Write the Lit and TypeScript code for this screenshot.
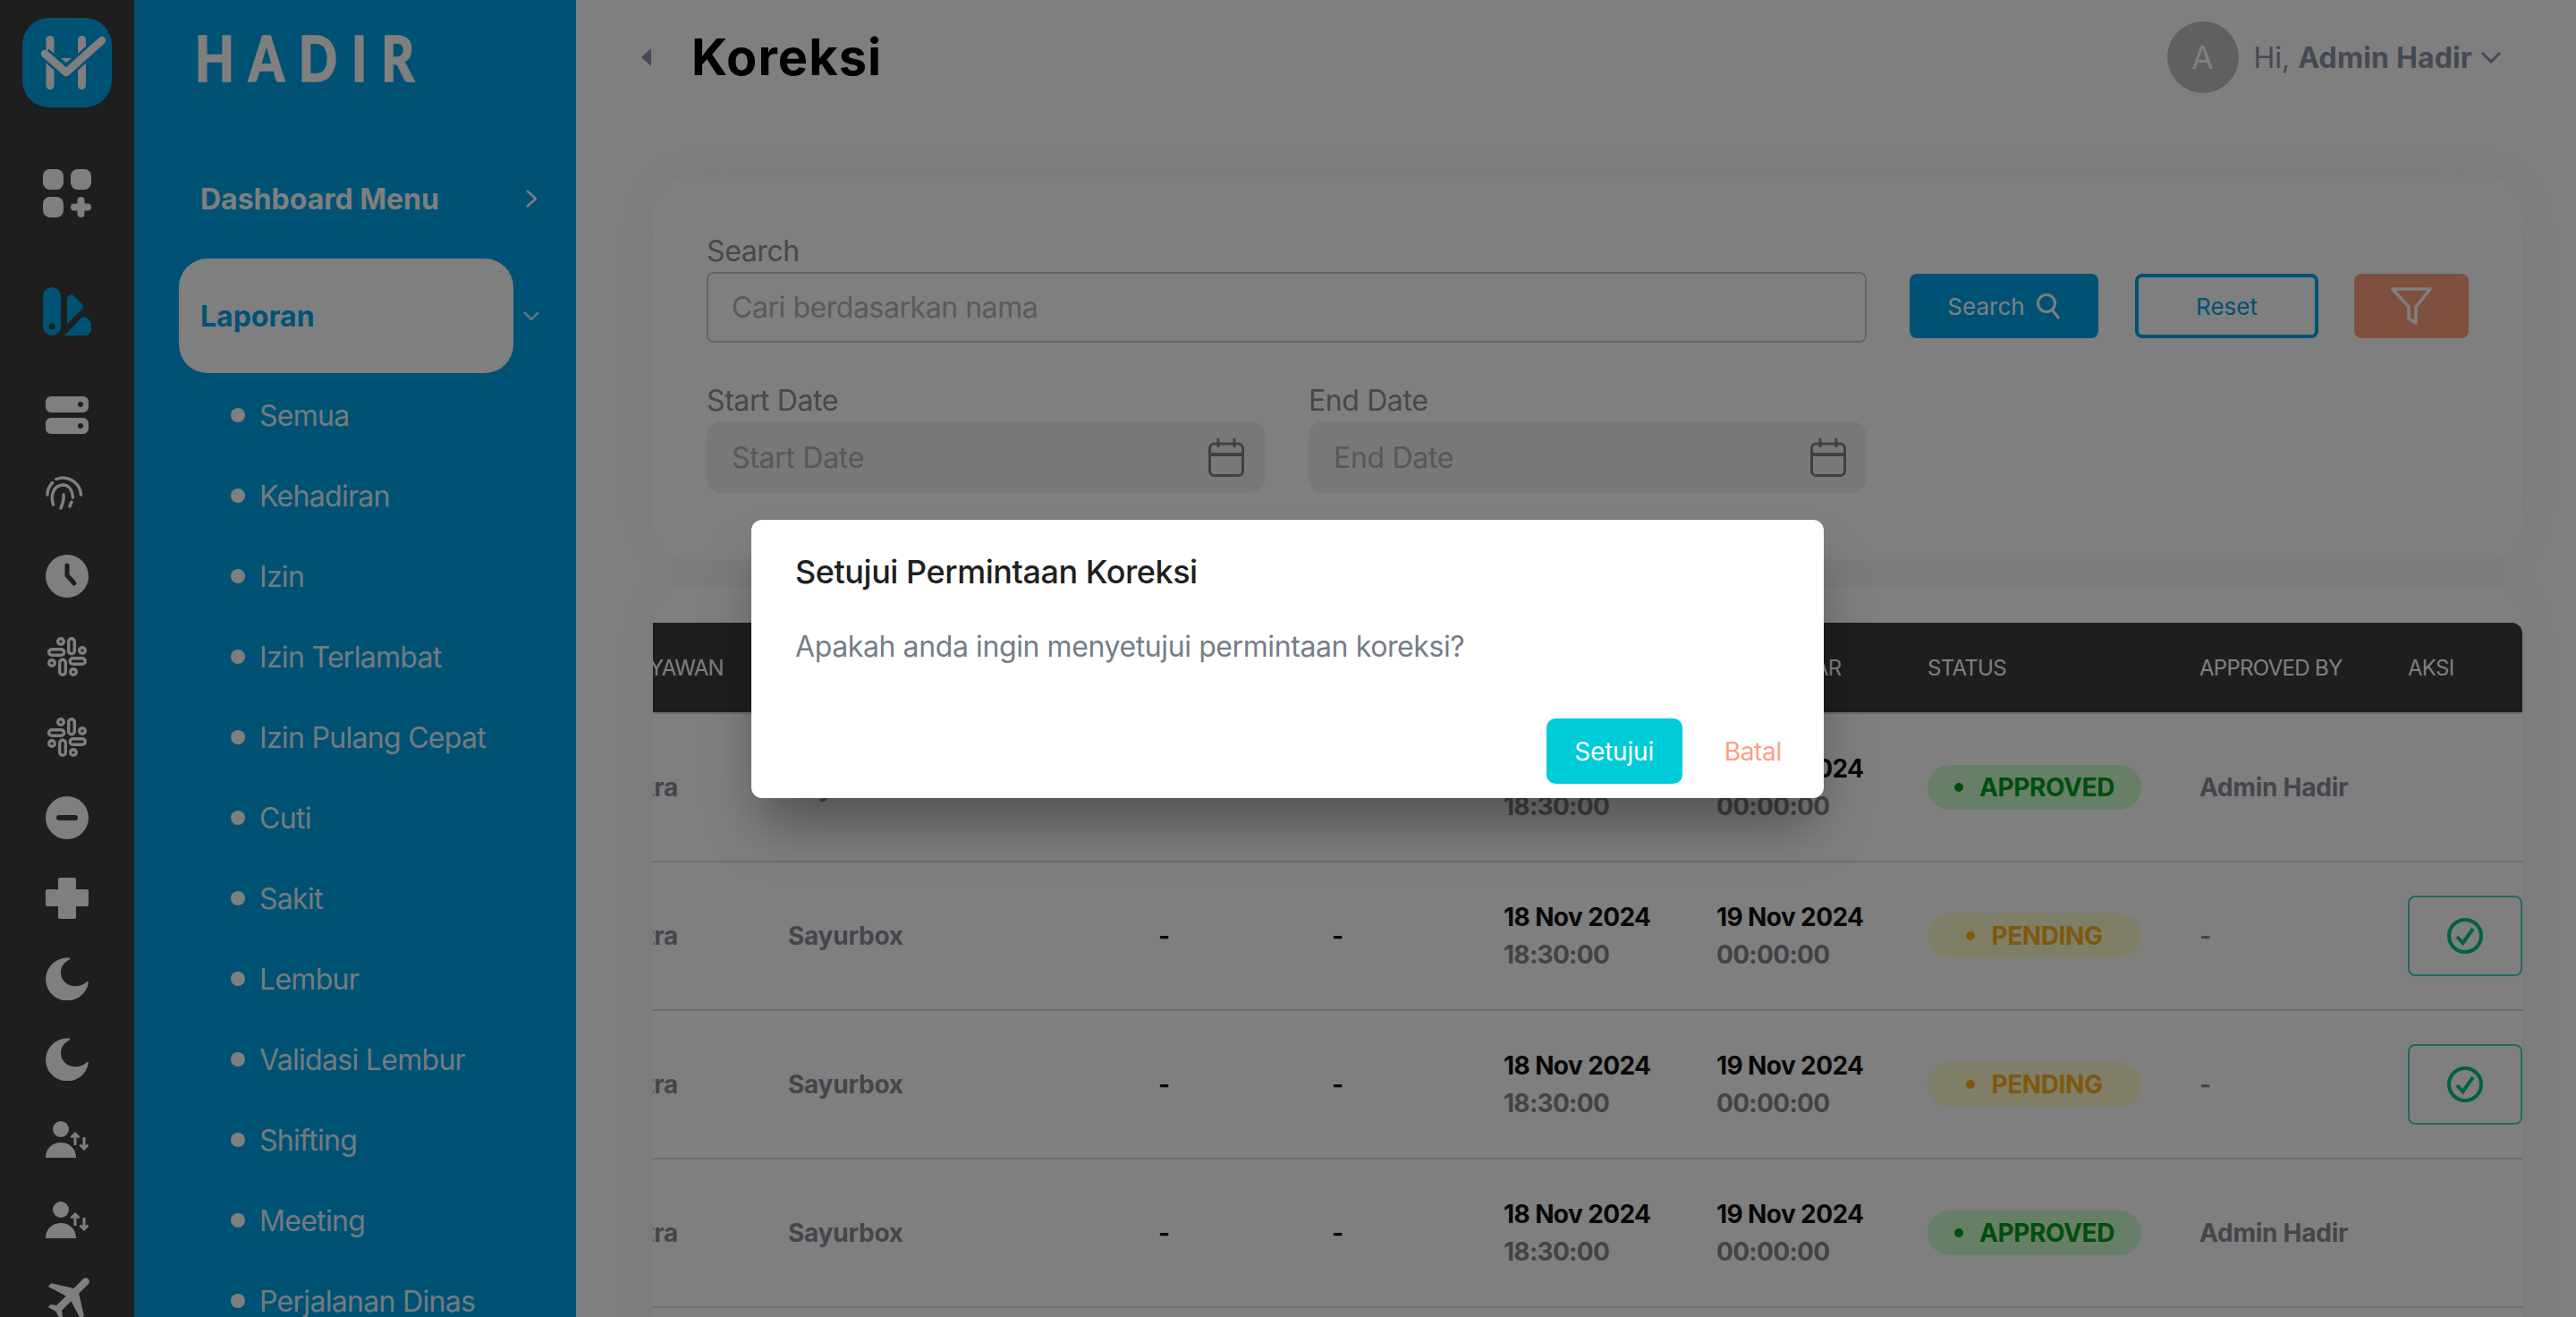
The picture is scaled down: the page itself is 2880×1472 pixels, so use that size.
import { LitElement, html, css } from 'lit';
import { customElement } from 'lit/decorators.js';

const SUB_MENU = [
  'Semua', 'Kehadiran', 'Izin', 'Izin Terlambat', 'Izin Pulang Cepat', 'Cuti',
  'Sakit', 'Lembur', 'Validasi Lembur', 'Shifting', 'Meeting', 'Perjalanan Dinas',
];

const ROWS = [
  { status: 'APPROVED', by: 'Admin Hadir', action: false },
  { status: 'PENDING', by: '-', action: true },
  { status: 'PENDING', by: '-', action: true },
  { status: 'APPROVED', by: 'Admin Hadir', action: false },
  { status: 'APPROVED', by: 'Admin Hadir', action: false },
];

const slack = html`<svg width="44" height="44" viewBox="0 0 44 44" fill="none" stroke="#fff" stroke-width="3.4">
  <rect x="23.7" y="1.7" width="6.6" height="17" rx="3.3" />
  <rect x="1.7" y="13.7" width="17" height="6.6" rx="3.3" />
  <rect x="25.3" y="23.7" width="17" height="6.6" rx="3.3" />
  <rect x="13.7" y="25.3" width="6.6" height="17" rx="3.3" />
  <circle cx="15" cy="5" r="3.3" /><circle cx="39" cy="15" r="3.3" />
  <circle cx="5" cy="29" r="3.3" /><circle cx="29" cy="39" r="3.3" />
</svg>`;

const moon = html`<svg width="48" height="48" viewBox="0 0 48 48" fill="#fff">
  <path d="M26 .6A24 24 0 1 0 47.8 28.4C48 27 47 26.6 46 27.3 36 37 17 32 17 17 17 10 21 5.500 26.600 2.500 27.600 1.700 27 .5 26 .6Z" />
</svg>`;

const person = html`<svg width="48" height="42" viewBox="0 0 48 42">
  <circle cx="17" cy="9" r="9" fill="#fff" />
  <path d="M0 41C0 30 8 24 17 24S34 30 34 41Z" fill="#fff" />
  <path d="M33 27V14M28.500 18.500 33 14l4.500 4.500M43 18V31M38.500 26.500 43 31l4.500-4.500" fill="none" stroke="#fff" stroke-width="3" />
</svg>`;

const calendar = html`<svg class="cal" width="40" height="43" viewBox="0 0 40 43" fill="none">
  <rect x="1.500" y="6" width="37" height="35.500" rx="5" />
  <path d="M1 18H39" stroke-width="4" />
  <path d="M11 0V10M29 0V10" />
</svg>`;

@customElement('app-root')
export class AppRoot extends LitElement {
  static override styles = css`
    :host {
      display: block;
      position: relative;
      height: 100vh;
      overflow: hidden;
      font-family: Inter, 'Liberation Sans', sans-serif;
      color: #111;
      background: #fff;
    }
    .page {
      display: flex;
      height: 100%;
    }

    .rail {
      flex: 0 0 150px;
      background: #3c3c3c;
      display: flex;
      flex-direction: column;
      align-items: center;
      padding-top: 20px;
      overflow: hidden;
    }
    .logo {
      flex: 0 0 100px;
      width: 100px;
      border-radius: 30px;
      background: #00a4e8;
      margin-bottom: 69px;
    }
    .logo svg, .rail-item svg { display: block; }
    .rail-grid { margin-bottom: 78px; }
    .rail-report { margin-bottom: 44px; }
    .rail-item {
      flex: 0 0 90px;
      display: flex;
      align-items: center;
      justify-content: center;
      width: 100%;
    }
    .rail-top { flex: none; display: block; }

    .side {
      flex: 0 0 494px;
      background: #00a4e8;
      color: #fff;
      overflow: hidden;
    }
    .brand {
      margin: 26px 0 0 68px;
      font-family: Lato, sans-serif;
      font-size: 71px;
      line-height: 75px;
      font-weight: 900;
      letter-spacing: 20px;
      -webkit-text-stroke: 1.5px #fff;
      transform: scaleX(0.8);
      transform-origin: left center;
    }
    .menu-head {
      display: flex;
      align-items: center;
      justify-content: space-between;
      margin: 101px 44px 0 74px;
      height: 40px;
      font-size: 32px;
      font-weight: 700;
    }
    .pill-row {
      display: flex;
      align-items: center;
      margin-top: 47px;
    }
    .pill {
      margin-left: 50px;
      width: 374px;
      height: 128px;
      box-sizing: border-box;
      padding-left: 24px;
      display: flex;
      align-items: center;
      background: #fff;
      border-radius: 32px;
      color: #00a4e8;
      font-size: 32px;
      font-weight: 700;
    }
    .pill-row svg { margin-left: 11px; }
    .sub {
      list-style: none;
      margin: 2px 0 0;
      padding: 0 0 0 108px;
    }
    .sub li {
      height: 90px;
      display: flex;
      align-items: center;
      gap: 16px;
      font-size: 32px;
      letter-spacing: -0.7px;
      white-space: nowrap;
      color: rgba(255, 255, 255, 0.92);
    }
    .sub li::before {
      content: '';
      width: 16px;
      height: 16px;
      border-radius: 50%;
      background: #fff;
    }

    .main {
      flex: 1;
      min-width: 0;
      background: #fff;
      overflow: hidden;
    }
    .top {
      height: 128px;
      display: flex;
      align-items: center;
      padding: 0 84px 0 73px;
    }
    .back {
      width: 0;
      height: 0;
      border-style: solid;
      border-width: 10px 11px 10px 0;
      border-color: transparent #8a94a8 transparent transparent;
      margin-right: 45px;
    }
    h1 {
      margin: 0;
      font-size: 56px;
      font-weight: 700;
      color: #000;
      letter-spacing: 1px;
      flex: 1;
    }
    .avatar {
      width: 80px;
      height: 80px;
      border-radius: 50%;
      background: #c0c0c0;
      color: #fff;
      display: flex;
      align-items: center;
      justify-content: center;
      font-size: 36px;
      margin-right: 17px;
    }
    .hi {
      font-size: 32px;
      color: #8a93a8;
      margin-right: 9px;
    }
    .who {
      font-size: 32px;
      font-weight: 700;
      color: #8a93a8;
      margin-right: 10px;
      letter-spacing: 0.15px;
    }
    .card {
      margin: 0 60px 0 86px;
      background: #fff;
      border-radius: 40px;
      box-shadow: 0 0 60px rgba(40, 70, 40, 0.07);
    }
    .filters {
      margin-top: 70px;
      height: 428px;
      box-sizing: border-box;
      padding: 62px 60px 0 60px;
    }
    .filter-row {
      display: flex;
      align-items: flex-end;
    }
    .field-wide { width: 1297px; margin-right: 48px; }
    label {
      display: block;
      height: 44px;
      line-height: 41px;
      font-size: 32px;
      color: #8f9096;
      letter-spacing: -0.4px;
    }
    .input {
      box-sizing: border-box;
      height: 79px;
      display: flex;
      align-items: center;
      padding-left: 26px;
      border: 2px solid #ccc;
      border-radius: 8px;
      font-size: 32px;
      color: #b4b4b4;
      letter-spacing: -0.45px;
    }
    .btn {
      box-sizing: border-box;
      height: 72px;
      margin-bottom: 5px;
      border-radius: 8px;
      display: flex;
      align-items: center;
      justify-content: center;
      font-size: 26px;
    }
    .btn-search { width: 211px; background: #00a4e8; color: #fff; gap: 12px; margin-right: 41px; }
    .btn-reset { width: 205px; border: 4px solid #00a4e8; color: #00a4e8; margin-right: 40px; }
    .btn-filter { width: 128px; background: #ff9e80; }
    .date-row {
      display: grid;
      grid-template-columns: 624px 624px;
      gap: 49px;
      margin-top: 44px;
      width: 1297px;
    }
    .date-input {
      height: 80px;
      box-sizing: border-box;
      display: flex;
      align-items: center;
      justify-content: space-between;
      padding: 0 23px 0 28px;
      border-radius: 16px;
      background: #f0f0f0;
      font-size: 32px;
      color: #b0b0b0;
      letter-spacing: -0.3px;
    }
    .cal { stroke: #808080; stroke-width: 3; }

    .table-card {
      margin-top: 30px;
      padding-top: 40px;
    }
    .table {
      display: grid;
      grid-template-columns: 151px 414px 194px 192px 238px 236px 304px 233px 128px;
      overflow: hidden;
    }
    .th {
      height: 100px;
      display: flex;
      align-items: center;
      background: #3c3c3c;
      color: #fff;
      font-size: 24px;
      white-space: nowrap;
      border-bottom: 2px solid #d8d8d8;
      letter-spacing: -0.7px;
    }
    .th:nth-child(9) { border-top-right-radius: 12px; }
    .td {
      height: 164px;
      display: flex;
      flex-direction: column;
      justify-content: center;
      align-items: flex-start;
      border-bottom: 2px solid #d8d8d8;
      font-size: 28px;
      font-weight: 700;
      color: #888c98;
      white-space: nowrap;
      letter-spacing: -0.25px;
    }
    .clip {
      flex-direction: row;
      justify-content: flex-end;
      align-items: center;
      overflow: hidden;
    }
    .th.clip { padding-right: 72px; }
    .td.clip { padding-right: 123px; }
    .dash { color: #111; }
    .date { color: #111; line-height: 42px; letter-spacing: -0.6px; }
    .time { color: #84868f; line-height: 42px; letter-spacing: -0.7px; }
    .badge {
      width: 239px;
      height: 50px;
      border-radius: 25px;
      display: flex;
      align-items: center;
      justify-content: center;
      gap: 18px;
      font-size: 28px;
      font-weight: 700;
      letter-spacing: -0.4px;
    }
    .badge::before {
      content: '';
      width: 10px;
      height: 10px;
      border-radius: 50%;
      background: currentColor;
    }
    .approved { background: #ccffcc; color: #009c1f; }
    .pending { background: #fffccc; color: #ffb020; }
    .check {
      box-sizing: border-box;
      width: 128px;
      height: 90px;
      border: 2px solid #3dd6c8;
      border-radius: 8px;
      display: flex;
      align-items: center;
      justify-content: center;
    }

    .overlay {
      position: absolute;
      inset: 0;
      background: rgba(0, 0, 0, 0.5);
    }
    .modal {
      position: absolute;
      left: 840px;
      top: 581px;
      width: 1199px;
      height: 311px;
      box-sizing: border-box;
      padding: 36px 47px 16px 49px;
      display: flex;
      flex-direction: column;
      background: #fff;
      border-radius: 12px;
      box-shadow: 0 40px 60px -10px rgba(0, 0, 0, 0.35);
    }
    .modal h2 {
      margin: 0;
      height: 44px;
      line-height: 44px;
      font-size: 36px;
      font-weight: 500;
      color: #1f1f1f;
      letter-spacing: -0.45px;
    }
    .modal p {
      margin: 40px 0 0;
      line-height: 44px;
      font-size: 32px;
      color: #767c88;
      letter-spacing: -0.4px;
    }
    .actions {
      margin-top: auto;
      display: flex;
      align-items: center;
      justify-content: flex-end;
      gap: 47px;
      font-size: 28px;
    }
    .ok {
      width: 152px;
      height: 73px;
      border-radius: 10px;
      background: #00ccd9;
      color: #fff;
      display: flex;
      align-items: center;
      justify-content: center;
      letter-spacing: -0.2px;
    }
    .cancel { color: #ff9e85; letter-spacing: -0.3px; }
  `;

  private _row(r: (typeof ROWS)[number]) {
    const cls = r.status === 'APPROVED' ? 'approved' : 'pending';
    return html`
      <div class="td clip"><span>Karyawan Mitra</span></div>
      <div class="td">Sayurbox</div>
      <div class="td dash">-</div>
      <div class="td dash">-</div>
      <div class="td"><span class="date">18 Nov 2024</span><span class="time">18:30:00</span></div>
      <div class="td"><span class="date">19 Nov 2024</span><span class="time">00:00:00</span></div>
      <div class="td"><span class="badge ${cls}">${r.status}</span></div>
      <div class="td">${r.by}</div>
      <div class="td">
        ${r.action
          ? html`<div class="check">
              <svg width="40" height="40" viewBox="0 0 40 40" fill="none" stroke="#00c08b" stroke-width="4">
                <circle cx="20" cy="20" r="18" />
                <path d="M11 21l6.500 7L29 12" />
              </svg>
            </div>`
          : ''}
      </div>
    `;
  }

  private _rail() {
    return html`
      <div class="logo">
        <svg width="100" height="100" viewBox="0 0 100 100">
          <rect x="26.500" y="20" width="9" height="60" rx="4.500" fill="#fff" />
          <rect x="62" y="20" width="9" height="60" rx="4.500" fill="#fff" />
          <path d="M43 45H55L49 50Z" fill="#fff" />
          <path d="M25 40 49 61 89 25" fill="none" stroke="#00a4e8" stroke-width="14" stroke-linejoin="round" />
          <path d="M25 40 49 61 89 25" fill="none" stroke="#fff" stroke-width="8.500" stroke-linecap="round" stroke-linejoin="round" />
        </svg>
      </div>
      <svg class="rail-top rail-grid" width="54" height="54" viewBox="0 0 54 54" fill="#fff">
        <rect width="23" height="23" rx="8" />
        <rect x="31" width="23" height="23" rx="8" />
        <rect y="31" width="23" height="23" rx="8" />
        <rect x="31" y="38.500" width="23" height="8" rx="4" />
        <rect x="38.500" y="31" width="8" height="23" rx="4" />
      </svg>
      <svg class="rail-top rail-report" width="54" height="54" viewBox="0 0 54 54" fill="#00a4e8">
        <path fill-rule="evenodd" d="M10 0A10 10 0 0 1 20 10V44A10 10 0 0 1 0 44V10A10 10 0 0 1 10 0ZM10 40.500A3.500 3.500 0 1 0 10 47.500 3.500 3.500 0 0 0 10 40.500Z" />
        <path d="M27 14C27 9 31 6 35 10L43.500 18.500C45.500 20.500 45.500 22 44 24L27 41Z" />
        <path d="M24 54 42 35C45 32.500 48 32.500 50 35L52 37C53.500 38.500 54 40 54 42V47C54 51 51 54 47 54Z" />
      </svg>
      <div class="rail-item">
        <svg width="48" height="42" viewBox="0 0 48 42" fill="#fff" fill-rule="evenodd">
          <path d="M6 0H42A6 6 0 0 1 48 6V12A6 6 0 0 1 42 18H6A6 6 0 0 1 0 12V6A6 6 0 0 1 6 0ZM39 6A3 3 0 1 0 39 12 3 3 0 0 0 39 6Z" />
          <path d="M6 24H42A6 6 0 0 1 48 30V36A6 6 0 0 1 42 42H6A6 6 0 0 1 0 36V30A6 6 0 0 1 6 24ZM39 30A3 3 0 1 0 39 36 3 3 0 0 0 39 30Z" />
        </svg>
      </div>
      <div class="rail-item">
        <svg width="48" height="44" viewBox="0 0 48 44" fill="none" stroke="#fff" stroke-width="3.500" stroke-linecap="round">
          <path d="M39.500 21A20 20 0 0 0 12 3.500M2 21A20 20 0 0 1 7.500 7.500" />
          <path d="M8.500 32C6 24 7 11 19 10 27 10 30 17 30.500 24" />
          <path d="M17 36C19 31 21 26 20 21M29 29 27 34" />
        </svg>
      </div>
      <div class="rail-item">
        <svg width="48" height="48" viewBox="0 0 48 48">
          <circle cx="24" cy="24" r="24" fill="#fff" />
          <path d="M24 12V23L32 32" fill="none" stroke="#3c3c3c" stroke-width="5" stroke-linecap="round" stroke-linejoin="round" />
        </svg>
      </div>
      <div class="rail-item">${slack}</div>
      <div class="rail-item">${slack}</div>
      <div class="rail-item">
        <svg width="48" height="48" viewBox="0 0 48 48">
          <circle cx="24" cy="24" r="24" fill="#fff" />
          <rect x="12" y="21" width="24" height="6" rx="3" fill="#3c3c3c" />
        </svg>
      </div>
      <div class="rail-item">
        <svg width="48" height="46" viewBox="0 0 48 46" fill="#fff">
          <rect x="14" width="20" height="46" rx="2" />
          <rect y="13" width="48" height="19" rx="2" />
        </svg>
      </div>
      <div class="rail-item">${moon}</div>
      <div class="rail-item">${moon}</div>
      <div class="rail-item">${person}</div>
      <div class="rail-item">${person}</div>
      <div class="rail-item">
        <svg width="65" height="65" viewBox="-1.85 1.85 24 24" fill="#fff">
          <path transform="rotate(45 12 12)" d="M21 16v-2l-8-5V3.500c0-.83-.67-1.500-1.500-1.500S10 2.670 10 3.500V9l-8 5v2l8-2.500V19l-2 1.500V22l3.500-1 3.500 1v-1.500L13 19v-5.500l8 2.500z" />
        </svg>
      </div>
    `;
  }

  override render() {
    return html`
      <div class="page">
        <nav class="rail">${this._rail()}</nav>
        <aside class="side">
          <div class="brand">HADIR</div>
          <div class="menu-head">
            <span>Dashboard Menu</span>
            <svg width="12" height="20" viewBox="0 0 12 20" fill="none" stroke="#fff" stroke-width="2.500"><path d="M1 1l10 9-10 9" /></svg>
          </div>
          <div class="pill-row">
            <div class="pill">Laporan</div>
            <svg width="18" height="10" viewBox="0 0 18 10" fill="none" stroke="#fff" stroke-opacity=".75" stroke-width="2.500"><path d="M1 1l8 8 8-8" /></svg>
          </div>
          <ul class="sub">${SUB_MENU.map((m) => html`<li>${m}</li>`)}</ul>
        </aside>
        <main class="main">
          <header class="top">
            <span class="back"></span>
            <h1>Koreksi</h1>
            <span class="avatar">A</span>
            <span class="hi">Hi,</span>
            <span class="who">Admin Hadir</span>
            <svg width="22" height="13" viewBox="0 0 22 13" fill="none" stroke="#8a93a8" stroke-width="3"><path d="M1 1l10 10L21 1" /></svg>
          </header>

          <section class="card filters">
            <div class="filter-row">
              <div class="field-wide">
                <label>Search</label>
                <div class="input">Cari berdasarkan nama</div>
              </div>
              <div class="btn btn-search">
                Search
                <svg width="28" height="30" viewBox="0 0 28 30" fill="none" stroke="#fff" stroke-width="3"><circle cx="12" cy="12" r="9.500" /><path d="M18 19l8 10" /></svg>
              </div>
              <div class="btn btn-reset">Reset</div>
              <div class="btn btn-filter">
                <svg width="46" height="42" viewBox="0 0 46 42" fill="none" stroke="#fff" stroke-width="3.500" stroke-linejoin="round"><path d="M2 2H44L28 22V40L20 35V22Z" /></svg>
              </div>
            </div>
            <div class="date-row">
              <div>
                <label>Start Date</label>
                <div class="date-input">Start Date ${calendar}</div>
              </div>
              <div>
                <label>End Date</label>
                <div class="date-input">End Date ${calendar}</div>
              </div>
            </div>
          </section>

          <section class="card table-card">
            <div class="table">
              <div class="th clip"><span>KARYAWAN</span></div>
              <div class="th">PERUSAHAAN</div>
              <div class="th">MASUK</div>
              <div class="th">KELUAR</div>
              <div class="th">TGL MASUK</div>
              <div class="th">TGL KELUAR</div>
              <div class="th">STATUS</div>
              <div class="th">APPROVED BY</div>
              <div class="th">AKSI</div>
              ${ROWS.map((r) => this._row(r))}
            </div>
          </section>
        </main>
      </div>

      <div class="overlay">
        <div class="modal" role="dialog">
          <h2>Setujui Permintaan Koreksi</h2>
          <p>Apakah anda ingin menyetujui permintaan koreksi?</p>
          <div class="actions">
            <span class="ok">Setujui</span>
            <span class="cancel">Batal</span>
          </div>
        </div>
      </div>
    `;
  }
}
